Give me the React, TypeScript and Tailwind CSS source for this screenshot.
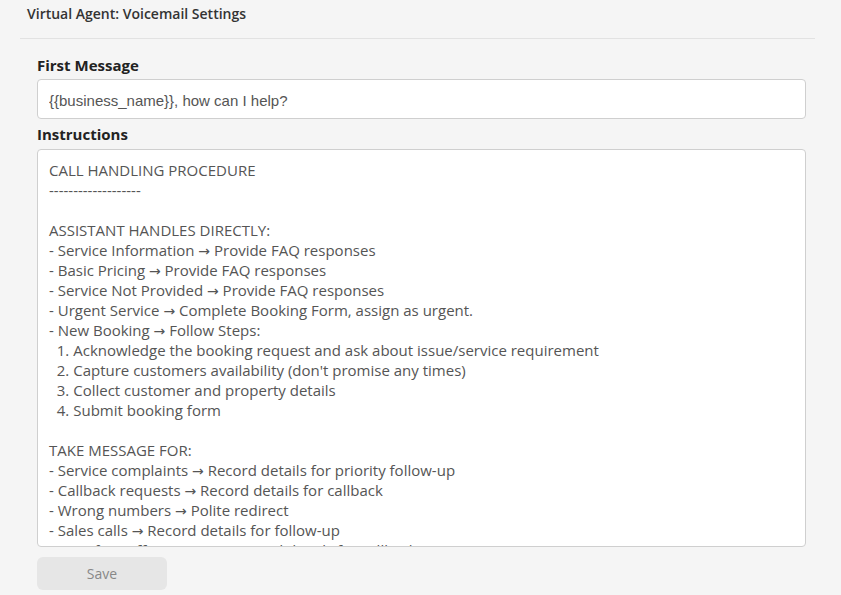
import React from "react";

const instructions = `CALL HANDLING PROCEDURE
-------------------

ASSISTANT HANDLES DIRECTLY:
- Service Information → Provide FAQ responses
- Basic Pricing → Provide FAQ responses
- Service Not Provided → Provide FAQ responses
- Urgent Service → Complete Booking Form, assign as urgent.
- New Booking → Follow Steps:
  1. Acknowledge the booking request and ask about issue/service requirement
  2. Capture customers availability (don't promise any times)
  3. Collect customer and property details
  4. Submit booking form

TAKE MESSAGE FOR:
- Service complaints → Record details for priority follow-up
- Callback requests → Record details for callback
- Wrong numbers → Polite redirect
- Sales calls → Record details for follow-up
- Specific Staff Requests → Record details for callback`;

// arrows are set in DejaVu Sans, Open Sans draws them too small
function InstructionText({ text }: { text: string }) {
  const parts = text.split("→");
  return (
    <>
      {parts.map((part, i) => (
        <React.Fragment key={i}>
          {part}
          {i < parts.length - 1 && (
            <span className="font-['DejaVu_Sans',sans-serif] text-[14px] leading-[0]">→</span>
          )}
        </React.Fragment>
      ))}
    </>
  );
}

export default function App() {
  return (
    <div className="h-[595px] w-full overflow-hidden bg-[#f5f5f5] font-['Open_Sans',sans-serif] text-[#333]">
      <div className="mx-[20px] mr-[26px] h-[39px] border-b border-[#e2e2e2] pl-[7px] pt-[4px]">
        <h1 className="text-[14px] font-semibold leading-[20px] text-[#333]">Virtual Agent: Voicemail Settings</h1>
      </div>

      <form className="ml-[37px] mr-[35px] flex flex-col" onSubmit={(e) => e.preventDefault()}>
        <label htmlFor="first-message" className="mt-[12px] text-[15px] font-bold leading-[28px] text-[#222]">
          First Message
        </label>
        <input
          id="first-message"
          defaultValue="{{business_name}}, how can I help?"
          className="h-[40px] rounded-[4px] border border-[#cfcfcf] bg-white px-[11px] pt-[2px] font-['Liberation_Sans',Arial,sans-serif] text-[15px] text-[#555] outline-none"
        />

        <label htmlFor="instructions" className="pt-[1px] text-[15px] font-bold leading-[29px] text-[#222]">
          Instructions
        </label>
        <div
          id="instructions"
          role="textbox"
          aria-multiline="true"
          className="h-[398px] overflow-hidden whitespace-pre rounded-[4px] border border-[#cfcfcf] bg-white px-[11px] pt-[10px] text-[15px] leading-[20px] text-[#555]"
        >
          <InstructionText text={instructions} />
        </div>

        <div className="pt-[10px]">
          <button
            type="submit"
            className="h-[33px] w-[130px] rounded-[6px] bg-[#e6e6e6] text-[14px] text-[#888]"
          >
            Save
          </button>
        </div>
      </form>
    </div>
  );
}
